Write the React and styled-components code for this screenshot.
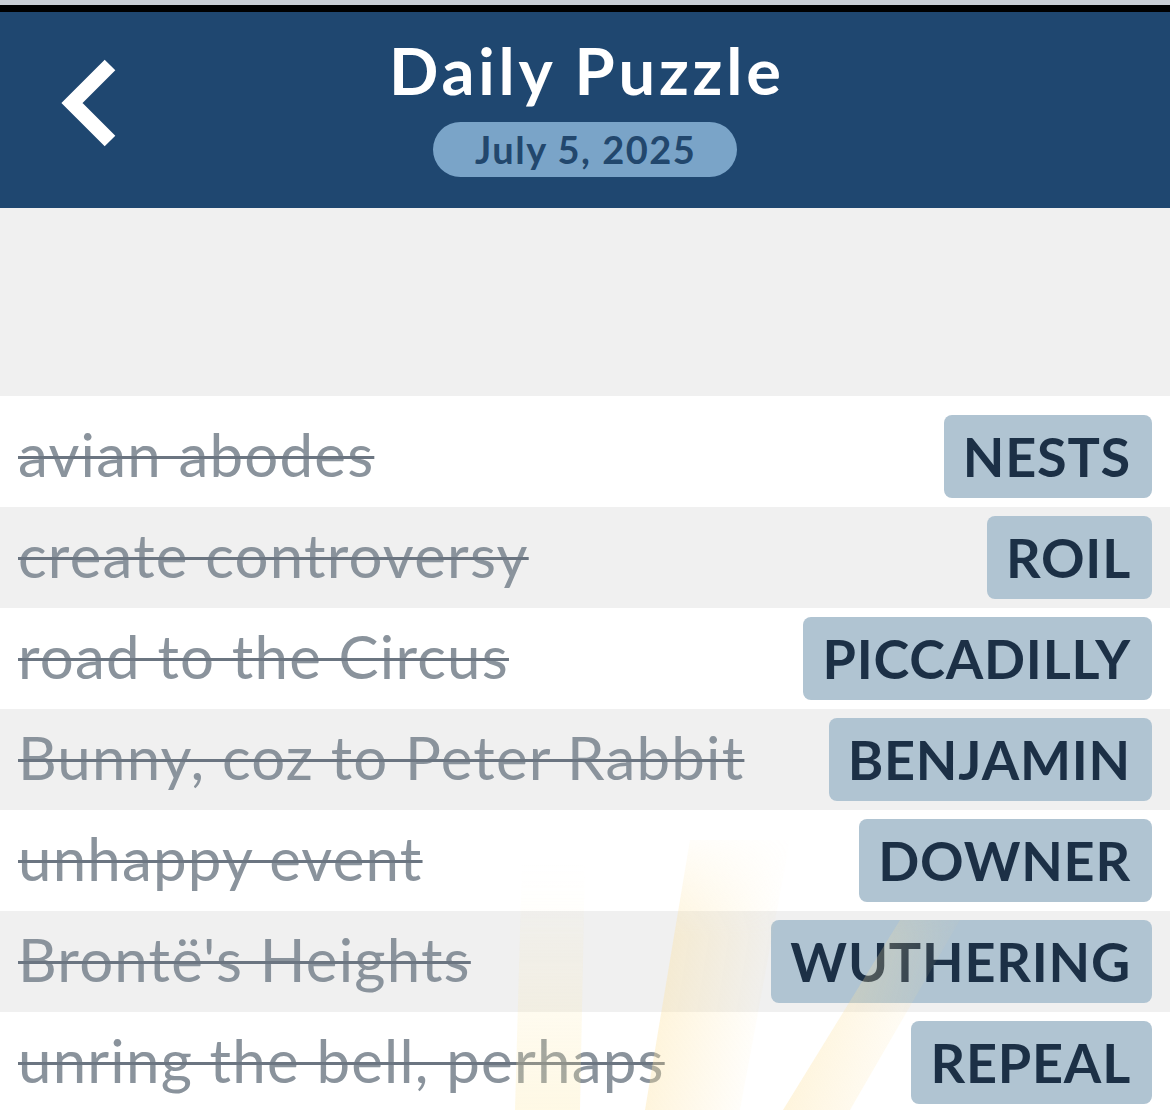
import React from "react";
import styled, { createGlobalStyle } from "styled-components";

const Global = createGlobalStyle`
  html, body { margin: 0; padding: 0; background: #ffffff; }
  body { font-family: "Lato", "Noto Sans", sans-serif; }
  * { box-sizing: border-box; }
`;

const Page = styled.div`
  width: 1170px;
  height: 1110px;
  overflow: hidden;
  position: relative;
  background: #f0f0f0;
`;

const StatusEdge = styled.div`
  height: 5px;
  background: #c9ced4;
`;

const BlackEdge = styled.div`
  height: 7px;
  background: #000000;
`;

const Header = styled.header`
  height: 196px;
  background: #1f4770;
  display: grid;
  grid-template-columns: 1fr auto 1fr;
  align-items: start;
`;

const BackButton = styled.button`
  justify-self: start;
  margin: 43px 0 0 50px;
  padding: 0;
  border: 0;
  background: transparent;
  width: 70px;
  height: 100px;
  display: flex;
`;

const TitleBlock = styled.div`
  display: flex;
  flex-direction: column;
  align-items: center;
  padding-top: 25px;
`;

const Title = styled.h1`
  margin: 0;
  font-size: 65px;
  line-height: 66px;
  font-weight: 700;
  color: #ffffff;
  letter-spacing: 3.8px;
  padding-left: 3.8px;
`;

const DatePill = styled.div`
  margin-top: 19px;
  width: 304px;
  height: 55px;
  border-radius: 28px;
  background: #7aa4c8;
  color: #22476d;
  font-size: 38px;
  font-weight: 700;
  letter-spacing: 1.5px;
  display: flex;
  align-items: center;
  justify-content: center;
  padding: 0 0 2px 1.5px;
`;

const Spacer = styled.div`
  height: 188px;
`;

const List = styled.div`
  display: flex;
  flex-direction: column;
  padding-top: 10px;
  background: #ffffff;
`;

const Row = styled.div`
  height: 101px;
  display: flex;
  align-items: center;
  justify-content: space-between;
  padding: 0 18px;
  background: ${(p) => (p.$alt ? "#f0f0f0" : "#ffffff")};
`;

const Clue = styled.span`
  font-size: 60px;
  letter-spacing: 1.2px;
  margin-bottom: 5px;
  color: #8a939c;
  text-decoration: line-through;
  text-decoration-color: #6b7581;
  text-decoration-thickness: 3px;
  white-space: nowrap;
`;

const Answer = styled.span`
  height: 83px;
  display: flex;
  align-items: center;
  padding: 0 21px 0 19px;
  border-radius: 8px;
  background: #b0c4d2;
  color: #1c3046;
  font-size: 54px;
  font-weight: 700;
  letter-spacing: 0.8px;
  white-space: nowrap;
`;

const Glow = styled.svg`
  position: absolute;
  left: 0;
  top: 0;
  width: 1170px;
  height: 1110px;
  pointer-events: none;
`;

const items = [
  ["avian abodes", "NESTS"],
  ["create controversy", "ROIL"],
  ["road to the Circus", "PICCADILLY"],
  ["Bunny, coz to Peter Rabbit", "BENJAMIN"],
  ["unhappy event", "DOWNER"],
  ["Brontë's Heights", "WUTHERING"],
  ["unring the bell, perhaps", "REPEAL"],
];

export default function App() {
  return (
    <Page>
      <Global />
      <StatusEdge />
      <BlackEdge />
      <Header>
        <BackButton aria-label="Back">
          <svg width="70" height="100" viewBox="0 0 70 100">
            <polyline
              points="60,10 22,48 60,86"
              fill="none"
              stroke="#ffffff"
              strokeWidth="15"
              strokeLinecap="butt"
              strokeLinejoin="miter"
            />
          </svg>
        </BackButton>
        <TitleBlock>
          <Title>Daily Puzzle</Title>
          <DatePill>July 5, 2025</DatePill>
        </TitleBlock>
        <div />
      </Header>
      <Spacer />
      <List>
        {items.map(([clue, ans], i) => (
          <Row key={ans} $alt={i % 2 === 1}>
            <Clue>{clue}</Clue>
            <Answer>{ans}</Answer>
          </Row>
        ))}
      </List>
      <Glow viewBox="0 0 1170 1110">
        <defs>
          <linearGradient id="fadeA" x1="0" y1="0" x2="0" y2="1">
            <stop offset="0" stopColor="#fde9a8" stopOpacity="0" />
            <stop offset="1" stopColor="#fde9a8" stopOpacity="0.3" />
          </linearGradient>
          <linearGradient id="fadeB" x1="0" y1="0" x2="1" y2="0.3">
            <stop offset="0" stopColor="#fde2a0" stopOpacity="0.5" />
            <stop offset="1" stopColor="#fde2a0" stopOpacity="0" />
          </linearGradient>
          <linearGradient id="fadeV" x1="0" y1="0" x2="0" y2="1">
            <stop offset="0" stopColor="#fff" stopOpacity="0" />
            <stop offset="0.4" stopColor="#fff" stopOpacity="1" />
            <stop offset="1" stopColor="#fff" stopOpacity="1" />
          </linearGradient>
          <mask id="vmask">
            <rect x="0" y="820" width="1170" height="290" fill="url(#fadeV)" />
          </mask>
        </defs>
        <g mask="url(#vmask)">
          <polygon points="522,860 585,860 580,1110 515,1110" fill="url(#fadeA)" />
          <polygon points="690,840 790,840 740,1110 645,1110" fill="url(#fadeB)" />
          <polygon points="900,920 960,920 850,1110 783,1110" fill="url(#fadeB)" />
        </g>
      </Glow>
    </Page>
  );
}
